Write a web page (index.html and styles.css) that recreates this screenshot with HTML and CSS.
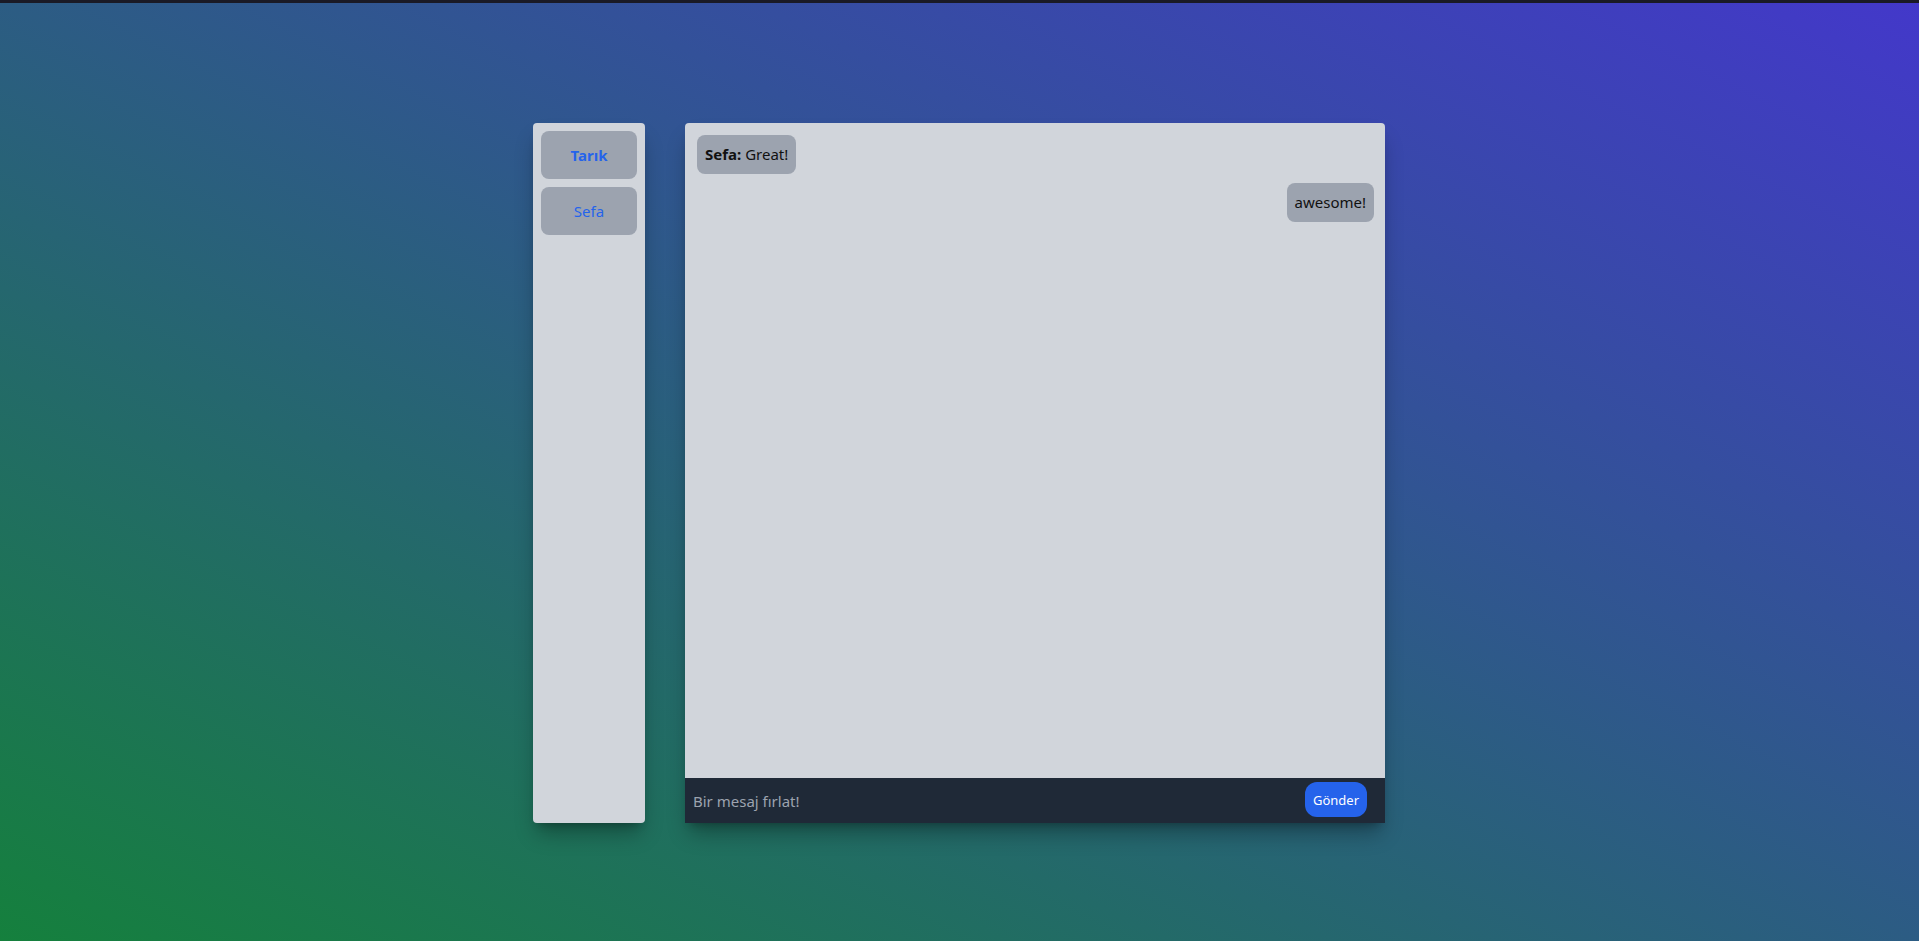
FILE: index.html
```html
<!DOCTYPE html>
<html lang="tr">
<head>
<meta charset="utf-8">
<title>Chat</title>
<link rel="stylesheet" href="styles.css">
</head>
<body>
<div class="topbar"></div>
<main class="page">
  <aside class="sidebar">
    <button class="user user-active">Tarık</button>
    <button class="user">Sefa</button>
  </aside>
  <section class="chat">
    <div class="messages">
      <div class="bubble bubble-in"><strong>Sefa:</strong> Great!</div>
      <div class="bubble bubble-out">awesome!</div>
    </div>
    <form class="composer">
      <input class="composer-input" type="text" placeholder="Bir mesaj fırlat!">
      <button class="send" type="button">Gönder</button>
    </form>
  </section>
</main>
</body>
</html>
```
FILE: styles.css
```css
* { box-sizing: border-box; }
html, body { margin: 0; padding: 0; }
body {
  min-height: 941px;
  height: 941px;
  overflow: hidden;
  font-family: "Noto Sans", "Open Sans", sans-serif;
  font-size: 16px;
  background: linear-gradient(to top right, #15803d, #4338ca);
}
.topbar {
  height: 3px;
  background: #1a1a26;
}
.page {
  display: flex;
  justify-content: center;
  gap: 40px;
  padding-top: 120px;
  padding-right: 1px;
}
.sidebar {
  width: 112px;
  height: 700px;
  background: #d1d5db;
  border-radius: 4px;
  padding: 8px;
  display: flex;
  flex-direction: column;
  gap: 8px;
  box-shadow: 0 14px 20px -4px rgba(0,0,0,0.3), 0 6px 8px -5px rgba(0,0,0,0.25);
}
.user {
  height: 48px;
  border: 0;
  border-radius: 8px;
  background: #9ca3af;
  color: #2563eb;
  font-family: inherit;
  font-size: 15px;
  cursor: pointer;
}
.user-active { font-weight: 700; }
.chat {
  width: 700px;
  height: 700px;
  display: flex;
  flex-direction: column;
  background: #d1d5db;
  border-radius: 4px 4px 0 0;
  box-shadow: 0 14px 20px -4px rgba(0,0,0,0.3), 0 6px 8px -5px rgba(0,0,0,0.25);
}
.messages {
  flex: 1;
  padding: 12px 11px 12px 12px;
  display: flex;
  flex-direction: column;
  align-items: flex-start;
  gap: 9px;
}
.bubble {
  background: #9ca3af;
  border-radius: 8px;
  padding: 8px 8px;
  line-height: 23px;
  font-size: 15px;
  color: #111;
}
.bubble strong { font-weight: 700; }
.bubble-out { align-self: flex-end; }
.composer {
  margin: 0;
  height: 45px;
  background: #1f2937;
  display: flex;
  align-items: center;
  padding: 0 18px 2px 8px;
}
.composer-input {
  flex: 1;
  border: 0;
  background: transparent;
  font-family: inherit;
  font-size: 15px;
  color: #e5e7eb;
  outline: none;
  padding: 0;
  margin-top: 3px;
}
.composer-input::placeholder { color: #9ca3af; }
.send {
  width: 62px;
  height: 35px;
  border: 0;
  border-radius: 12px;
  background: #2563eb;
  color: #fff;
  font-family: inherit;
  font-size: 13px;
  padding: 0;
}
```
